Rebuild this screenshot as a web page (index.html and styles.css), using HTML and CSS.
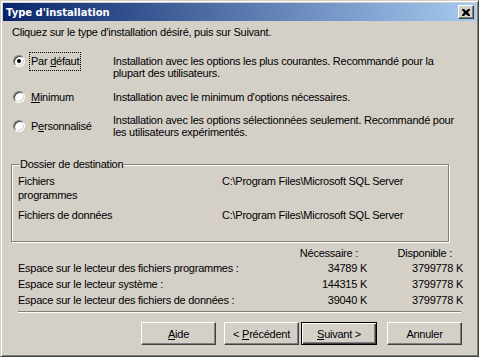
FILE: index.html
```html
<!DOCTYPE html>
<html lang="fr">
<head>
  <meta charset="UTF-8">
  <title>Type d'installation</title>
  <link rel="stylesheet" href="styles.css">
</head>
<body>

<div class="window">
  <div class="titlebar">
    <span class="title">Type d'installation</span>
    <span class="close">
      <svg width="8" height="7" viewBox="0 0 8 7">
        <path d="M0 0h2l2 2 2-2h2v1l-2 2.5 2 2.5v1h-2l-2-2-2 2h-2v-1l2-2.5-2-2.5z" fill="#000"/>
      </svg>
    </span>
  </div>

  <div class="content">
    <p class="intro">Cliquez sur le type d'installation désiré, puis sur Suivant.</p>

    <div class="options">
      <div class="option">
        <label class="choice">
          <span class="radio checked"></span>
          <span class="focus">Par <u>d</u>éfaut</span>
        </label>
        <p class="desc">Installation avec les options les plus courantes. Recommandé pour la<br>plupart des utilisateurs.</p>
      </div>
      <div class="option second">
        <label class="choice">
          <span class="radio"></span>
          <span class="text"><u>M</u>inimum</span>
        </label>
        <p class="desc">Installation avec le minimum d'options nécessaires.</p>
      </div>
      <div class="option third">
        <label class="choice">
          <span class="radio"></span>
          <span class="text">P<u>e</u>rsonnalisé</span>
        </label>
        <p class="desc">Installation avec les options sélectionnées seulement. Recommandé pour<br>les utilisateurs expérimentés.</p>
      </div>
    </div>

    <fieldset class="group">
      <legend>Dossier de destination</legend>
      <div class="dest">
        <span>Fichiers<br>programmes</span>
        <span>C:\Program Files\Microsoft SQL Server</span>
        <span>Fichiers de données</span>
        <span>C:\Program Files\Microsoft SQL Server</span>
      </div>
    </fieldset>

    <div class="space">
      <span></span><span class="head need">Nécessaire :</span><span class="head avail">Disponible :</span>
      <span>Espace sur le lecteur des fichiers programmes :</span><span class="num">34789 K</span><span class="num">3799778 K</span>
      <span>Espace sur le lecteur système :</span><span class="num">144315 K</span><span class="num">3799778 K</span>
      <span>Espace sur le lecteur des fichiers de données :</span><span class="num">39040 K</span><span class="num">3799778 K</span>
    </div>

    <div class="separator"></div>

    <div class="buttons">
      <button class="btn help"><u>A</u>ide</button>
      <button class="btn back">&lt; <u>P</u>récédent</button>
      <button class="btn default"><u>S</u>uivant &gt;</button>
      <button class="btn cancel">Annuler</button>
    </div>
  </div>
</div>

</body>
</html>
```

FILE: styles.css
```css
* {
  box-sizing: border-box;
}

body {
  margin: 0;
  background: #d4d0c8;
  font-family: 'Liberation Sans', Arial, sans-serif;
  font-size: 11px;
  letter-spacing: -0.25px;
  color: #000;
}

p {
  margin: 0;
}

.window {
  width: 479px;
  height: 357px;
  background: #d4d0c8;
  border: 1px solid;
  border-color: #d4d0c8 #404040 #404040 #d4d0c8;
  box-shadow: inset 1px 1px #fff, inset -1px -1px #808080;
  padding: 2px;
}

.titlebar {
  height: 18px;
  background: linear-gradient(to right, #0a246a, #a6caf0);
  display: flex;
  align-items: center;
  justify-content: space-between;
  padding: 0 2px 0 3px;
}

.title {
  color: #fff;
  font-family: 'DejaVu Sans', Tahoma, sans-serif;
  font-weight: bold;
  font-size: 10px;
  letter-spacing: 0;
}

.close {
  width: 16px;
  height: 14px;
  background: #d4d0c8;
  border: 1px solid;
  border-color: #fff #404040 #404040 #fff;
  box-shadow: inset -1px -1px #808080;
  display: flex;
  align-items: center;
  justify-content: center;
}

.content {
  padding: 0 14px 0 9px;
}

.intro {
  margin-top: 5px;
  line-height: 13px;
}

.options {
  margin-top: 16px;
}

.option {
  display: grid;
  grid-template-columns: 101px 1fr;
  align-items: start;
}

.option.second {
  margin-top: 12px;
}

.option.third {
  margin-top: 11px;
  align-items: center;
}

.choice {
  display: flex;
  align-items: center;
  gap: 4px;
  padding-left: 1px;
  height: 12px;
}

.radio {
  width: 12px;
  height: 12px;
  flex: none;
  border-radius: 50%;
  background: #fff;
  border: 1px solid;
  border-color: #808080 #fff #fff #808080;
  box-shadow: inset 1px 1px #404040, inset -1px -1px #d4d0c8;
  display: flex;
  align-items: center;
  justify-content: center;
}

.radio.checked::after {
  content: '';
  width: 4px;
  height: 4px;
  border-radius: 50%;
  background: #000;
}

.text,
.focus {
  line-height: 13px;
  padding: 2px 1px;
  border: 1px solid transparent;
  white-space: nowrap;
}

.focus {
  border: 1px dotted #000;
}

.desc {
  line-height: 12px;
  white-space: nowrap;
}

.group {
  margin: 20px 0 0 -1px;
  padding: 3px 5px 0 5px;
  width: 438px;
  height: 84px;
  border: 1px solid #808080;
  box-shadow: inset 1px 1px #fff, 1px 1px #fff;
}

.group legend {
  padding: 0 1px;
  margin-left: 2px;
  line-height: 13px;
  background: #d4d0c8;
}

.dest {
  display: grid;
  grid-template-columns: 204px 1fr;
  row-gap: 6px;
  line-height: 14px;
  padding-left: 1px;
}

.space {
  margin: 4px 0 0 6px;
  display: grid;
  grid-template-columns: 250px 99px 96px;
  line-height: 16px;
}

.head {
  line-height: 14px;
}

.need {
  text-align: right;
  padding-right: 9px;
}

.avail {
  text-align: right;
  padding-right: 11px;
}

.num {
  text-align: right;
}

.separator {
  margin: 3px 1px 0 6px;
  height: 2px;
  border-top: 1px solid #808080;
  border-bottom: 1px solid #fff;
}

.buttons {
  display: flex;
  justify-content: flex-end;
  margin-top: 9px;
}

.btn {
  width: 75px;
  height: 23px;
  padding: 0;
  font: inherit;
  letter-spacing: inherit;
  color: #000;
  background: #d4d0c8;
  border: 1px solid;
  border-color: #fff #404040 #404040 #fff;
  box-shadow: inset -1px -1px #808080;
}

.btn.back {
  margin-left: 8px;
}

.btn.default {
  width: 76px;
  margin-left: 2px;
  border: 1px solid #000;
  box-shadow: inset 1px 1px #fff, inset -1px -1px #404040, inset -2px -2px #808080;
}

.btn.cancel {
  margin-left: 10px;
}
```
